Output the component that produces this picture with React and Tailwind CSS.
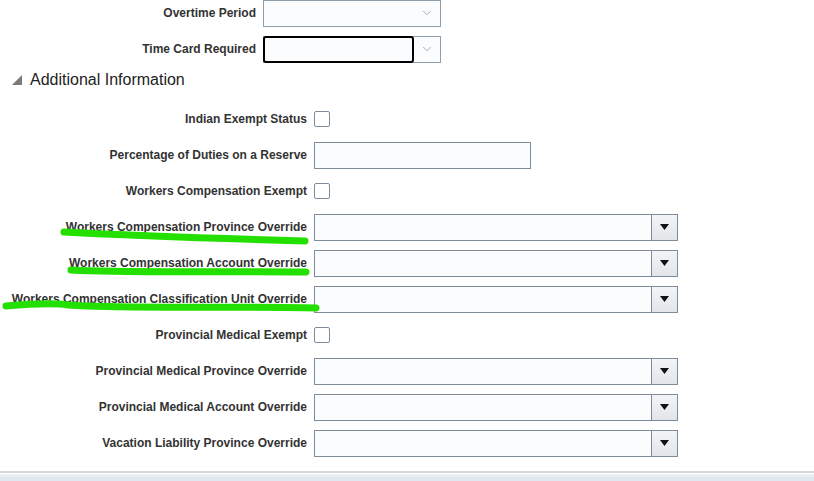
import { ChevronDown } from "lucide-react";

const font = { fontFamily: '"Liberation Sans", Arial, sans-serif' };

function TopSelect({ focused }) {
  return (
    <div className="flex h-[27px] w-[178px] border border-[#8d9eac] bg-[#fbfcfd]">
      <div
        className={`flex-1 ${
          focused ? "-m-px mr-0 rounded-[3px] border-2 border-black bg-[#fbfcfd]" : ""
        }`}
      ></div>
      <div className="flex w-[26px] items-center justify-center">
        <ChevronDown size={14} strokeWidth={1.2} className="text-[#7f8b95]" />
      </div>
    </div>
  );
}

function Select() {
  return (
    <div className="flex h-[27px] w-[364px] border border-[#7b8d9c] bg-[#fbfcfd]">
      <div className="flex-1"></div>
      <div className="flex w-[26px] items-center justify-center border-l border-[#7b8d9c] bg-gradient-to-b from-[#f3f4f6] to-[#e2e5e9]">
        <svg width="9" height="6" viewBox="0 0 9 6">
          <path d="M0 0 H9 L4.5 6 Z" fill="#111" />
        </svg>
      </div>
    </div>
  );
}

function Checkbox() {
  return (
    <div className="h-[16px] w-[16px] rounded-[2px] border border-[#7b8d9c] bg-white"></div>
  );
}

function Row({ label, children }) {
  return (
    <div className="flex h-9 items-center gap-[7px]">
      <div className="w-[307px] text-right text-[12px] font-bold text-[#333]">
        {label}
      </div>
      {children}
    </div>
  );
}

function TopRow({ label, children }) {
  return (
    <div className="flex h-9 items-center gap-[7px]">
      <div className="w-[256px] text-right text-[12px] font-bold text-[#333]">
        {label}
      </div>
      {children}
    </div>
  );
}

const rows = [
  { label: "Indian Exempt Status", type: "check" },
  { label: "Percentage of Duties on a Reserve", type: "input" },
  { label: "Workers Compensation Exempt", type: "check" },
  { label: "Workers Compensation Province Override", type: "select" },
  { label: "Workers Compensation Account Override", type: "select" },
  { label: "Workers Compensation Classification Unit Override", type: "select" },
  { label: "Provincial Medical Exempt", type: "check" },
  { label: "Provincial Medical Province Override", type: "select" },
  { label: "Provincial Medical Account Override", type: "select" },
  { label: "Vacation Liability Province Override", type: "select" },
];

export default function App() {
  return (
    <div
      className="relative flex h-[481px] w-[814px] flex-col overflow-hidden bg-white"
      style={font}
    >
      <div className="-mt-[5px]">
        <TopRow label="Overtime Period">
          <TopSelect />
        </TopRow>
        <TopRow label="Time Card Required">
          <TopSelect focused />
        </TopRow>
      </div>

      <div className="mb-[8px] flex h-[26px] items-center gap-[8px] pl-[12px]">
        <svg width="10" height="10" viewBox="0 0 10 10">
          <path d="M10 0 V10 H0 Z" fill="#7a7a7a" />
        </svg>
        <span className="text-[16px] text-[#222]">Additional Information</span>
      </div>

      <div>
        {rows.map((r) => (
          <Row key={r.label} label={r.label}>
            {r.type === "check" && <Checkbox />}
            {r.type === "input" && (
              <div className="h-[27px] w-[217px] border border-[#7b8d9c] bg-[#fbfcfd]"></div>
            )}
            {r.type === "select" && <Select />}
          </Row>
        ))}
      </div>

      <div className="mt-auto">
        <div className="h-[2px] bg-[#d4d6d8]"></div>
        <div className="h-px bg-white"></div>
        <div className="h-[3px] bg-[#eceef0]"></div>
        <div className="h-[4px] bg-[#dfe7f1]"></div>
      </div>

      <svg
        className="pointer-events-none absolute inset-0"
        width="814"
        height="481"
        viewBox="0 0 814 481"
      >
        <g fill="none" stroke="#23e000" strokeLinecap="round" strokeWidth="7">
          <path d="M64 232 C 120 235, 200 238, 305 241" />
          <path d="M71 270 C 120 273, 200 271, 306 272" />
          <path d="M6 306 C 30 304, 55 303, 68 305 C 120 309, 250 306, 316 308" />
        </g>
      </svg>
    </div>
  );
}
